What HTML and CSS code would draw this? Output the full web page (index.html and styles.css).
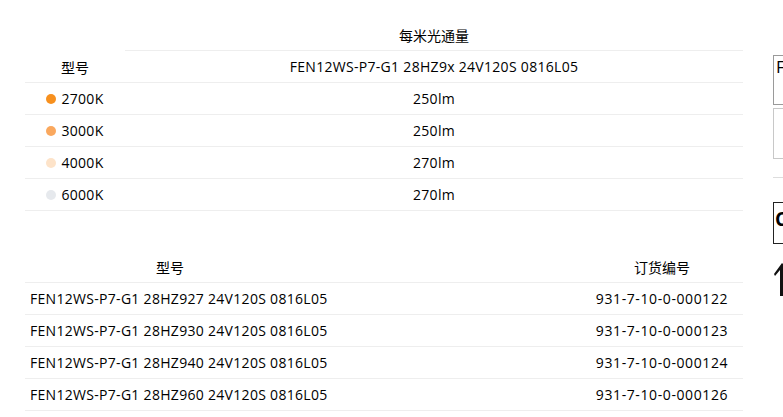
FILE: index.html
```html
<!DOCTYPE html>
<html lang="zh">
<head>
<meta charset="utf-8">
<title>每米光通量</title>
<link rel="stylesheet" href="styles.css">
</head>
<body>
<div class="page">
  <main class="main">
    <section class="flux">
      <div class="row head-top">
        <div class="cell c1 blank"></div>
        <div class="cell c2 line">每米光通量</div>
      </div>
      <div class="row line">
        <div class="cell c1">型号</div>
        <div class="cell c2 latin">FEN12WS-P7-G1 28HZ9x 24V120S 0816L05</div>
      </div>
      <div class="row line">
        <div class="cell c1 latin"><span class="dot d2700"></span>2700K</div>
        <div class="cell c2 latin">250lm</div>
      </div>
      <div class="row line">
        <div class="cell c1 latin"><span class="dot d3000"></span>3000K</div>
        <div class="cell c2 latin">250lm</div>
      </div>
      <div class="row line">
        <div class="cell c1 latin"><span class="dot d4000"></span>4000K</div>
        <div class="cell c2 latin">270lm</div>
      </div>
      <div class="row line">
        <div class="cell c1 latin"><span class="dot d6000"></span>6000K</div>
        <div class="cell c2 latin">270lm</div>
      </div>
    </section>

    <section class="order">
      <div class="orow line">
        <div class="cell center">型号</div>
        <div class="cell"></div>
        <div class="cell center">订货编号</div>
      </div>
      <div class="orow line">
        <div class="cell left latin">FEN12WS-P7-G1 28HZ927 24V120S 0816L05</div>
        <div class="cell"></div>
        <div class="cell center latin code">931-7-10-0-000122</div>
      </div>
      <div class="orow line">
        <div class="cell left latin">FEN12WS-P7-G1 28HZ930 24V120S 0816L05</div>
        <div class="cell"></div>
        <div class="cell center latin code">931-7-10-0-000123</div>
      </div>
      <div class="orow line">
        <div class="cell left latin">FEN12WS-P7-G1 28HZ940 24V120S 0816L05</div>
        <div class="cell"></div>
        <div class="cell center latin code">931-7-10-0-000124</div>
      </div>
      <div class="orow line">
        <div class="cell left latin">FEN12WS-P7-G1 28HZ960 24V120S 0816L05</div>
        <div class="cell"></div>
        <div class="cell center latin code">931-7-10-0-000126</div>
      </div>
    </section>
  </main>

  <aside class="side">
    <div class="box box-a">F</div>
    <div class="box box-b"></div>
    <div class="divider"></div>
    <div class="box box-c">C</div>
    <svg class="arrow" width="12" height="34" viewBox="0 0 12 34" aria-hidden="true">
      <path d="M8 0 L0 11 L1 13 L6 7 L6 33 L9 33 L9 1 Z" fill="#111"/>
    </svg>
  </aside>
</div>
</body>
</html>
```

FILE: styles.css
```css
html, body {
  margin: 0;
  padding: 0;
  background: #fff;
}
body {
  font-family: "Open Sans", "Noto Sans CJK SC", sans-serif;
  font-size: 14px;
  color: #000;
  overflow: hidden;
  width: 783px;
  height: 417px;
}
.page {
  display: flex;
  align-items: flex-start;
  padding-top: 19px;
  padding-left: 25px;
  gap: 30px;
}
.main {
  width: 718px;
  flex: none;
  display: flex;
  flex-direction: column;
  gap: 40px;
}
.row {
  display: grid;
  grid-template-columns: 100px 1fr;
  height: 32px;
  box-sizing: border-box;
}
.orow {
  display: grid;
  grid-template-columns: 290px 1fr 162px;
  height: 32px;
  box-sizing: border-box;
}
.line {
  border-bottom: 1px solid #eeeeee;
}
.cell {
  display: flex;
  align-items: center;
  justify-content: center;
  box-sizing: border-box;
  white-space: nowrap;
}
.latin {
  letter-spacing: 0.3px;
}
.code {
  letter-spacing: 0.6px;
}
.cell.left {
  justify-content: flex-start;
  padding-left: 5px;
}
.cell.center {
  justify-content: center;
}
.dot {
  width: 10px;
  height: 10px;
  border-radius: 50%;
  margin-right: 5px;
  flex: none;
}
.d2700 { background: #f7901e; }
.d3000 { background: #faa85e; }
.d4000 { background: #fde3c9; }
.d6000 { background: #e6e9ed; }

.side {
  width: 200px;
  flex: none;
  display: flex;
  flex-direction: column;
  padding-top: 36px;
}
.box {
  box-sizing: border-box;
  width: 200px;
  line-height: 1;
}
.box-a {
  height: 50px;
  border: 1px solid #9a9a9a;
  font-size: 17px;
  padding: 2px 2px;
}
.box-b {
  height: 51px;
  margin-top: 3px;
  border: 1px solid #c8c8c8;
}
.divider {
  height: 1px;
  background: #dddddd;
  margin-top: 18px;
}
.box-c {
  height: 42px;
  margin-top: 24px;
  border: 1px solid #222;
  font-weight: 700;
  font-size: 19px;
  padding: 7px 1px;
}
.arrow {
  margin-top: 19px;
  margin-left: 1px;
}
```
